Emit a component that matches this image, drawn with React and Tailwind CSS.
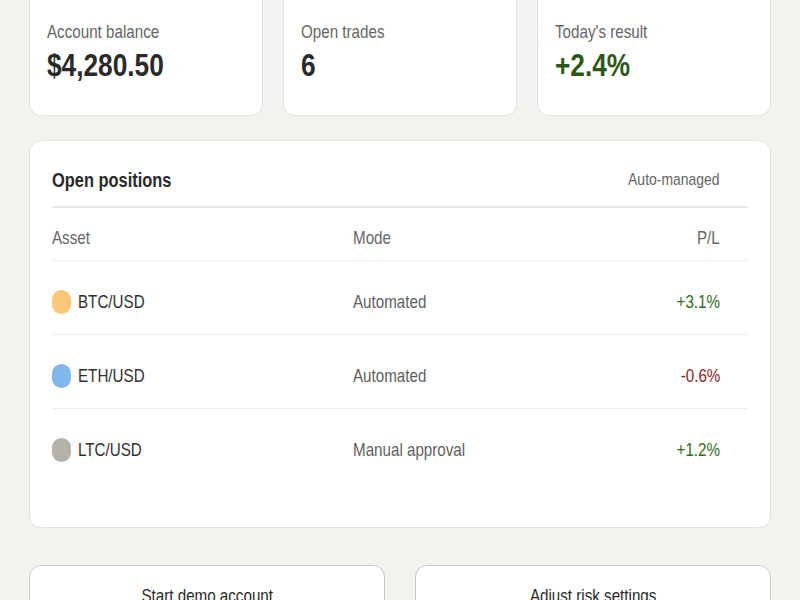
import React from "react";

// narrow text: Arial-metric font squeezed horizontally like the screenshot
const N = ({ children, className = "", origin = "origin-left" }) => (
  <span className={`inline-block scale-x-[0.82] whitespace-nowrap ${origin} ${className}`}>{children}</span>
);

const stats = [
  { label: "Account balance", value: "$4,280.50", color: "text-[#2a2a2a]" },
  { label: "Open trades", value: "6", color: "text-[#2a2a2a]" },
  { label: "Today's result", value: "+2.4%", color: "text-[#2d5716]" },
];

const positions = [
  { asset: "BTC/USD", dot: "bg-[#f8c878]", mode: "Automated", pl: "+3.1%", plColor: "text-[#35691c]" },
  { asset: "ETH/USD", dot: "bg-[#82b6ec]", mode: "Automated", pl: "-0.6%", plColor: "text-[#8a2424]" },
  { asset: "LTC/USD", dot: "bg-[#b6b2aa]", mode: "Manual approval", pl: "+1.2%", plColor: "text-[#35691c]" },
];

const App = () => {
  return (
    <div className="min-h-[600px] bg-[#f3f2ee] px-[29px] font-['Liberation_Sans',Arial,sans-serif] text-[#333]">
      {/* stats */}
      <div className="grid grid-cols-3 gap-[20px]">
        {stats.map((s) => (
          <div
            key={s.label}
            className="h-[116px] rounded-b-[12px] border border-t-0 border-[#e3e1db] bg-white px-[17px] pt-[21px]"
          >
            <div className="text-[18.5px] leading-[22px] text-[#666]">
              <N>{s.label}</N>
            </div>
            <div className={`mt-[4px] text-[32px] font-bold leading-[36px] ${s.color}`}>
              <N>{s.value}</N>
            </div>
          </div>
        ))}
      </div>

      {/* positions */}
      <div className="mt-[24px] rounded-[12px] border border-[#e3e1db] bg-white px-[22px] pb-[45px] pt-[25px]">
        <div className="flex items-center justify-between border-b-2 border-[#e8e6e1] pb-[12px] pr-[28px]">
          <h2 className="text-[20px] font-bold leading-[28px] text-[#2a2a2a]">
            <N>Open positions</N>
          </h2>
          <span className="text-[17px] leading-[22px] text-[#666]">
            <N origin="origin-right">Auto-managed</N>
          </span>
        </div>

        <div className="grid grid-cols-[301px_1fr_auto] border-b border-[#efede9] pb-[11px] pr-[28px] pt-[19px] text-[18.5px] leading-[22px] text-[#666]">
          <N>Asset</N>
          <N>Mode</N>
          <N origin="origin-right">P/L</N>
        </div>

        {positions.map((p, i) => (
          <div
            key={p.asset}
            className={`grid grid-cols-[301px_1fr_auto] items-center pb-[20px] pr-[28px] pt-[29px] text-[18.5px] leading-[22px] ${
              i < positions.length - 1 ? "border-b border-[#efede9]" : ""
            }`}
          >
            <div className="flex items-center gap-[7px]">
              <span className={`h-[24px] w-[19px] shrink-0 rounded-full ${p.dot}`} />
              <N className="text-[#2f2f2f]">{p.asset}</N>
            </div>
            <N className="text-[#5f5f5f]">{p.mode}</N>
            <N origin="origin-right" className={p.plColor}>{p.pl}</N>
          </div>
        ))}
      </div>

      {/* actions */}
      <div className="mt-[37px] grid grid-cols-2 gap-[30px]">
        <button className="flex h-[60px] items-center justify-center rounded-[12px] border border-[#c9c7c1] bg-white pt-[2px] text-[18.5px] text-[#2a2a2a]">
          <N origin="origin-center">Start demo account</N>
        </button>
        <button className="flex h-[60px] items-center justify-center rounded-[12px] border border-[#c9c7c1] bg-white pt-[2px] text-[18.5px] text-[#2a2a2a]">
          <N origin="origin-center">Adjust risk settings</N>
        </button>
      </div>
    </div>
  );
};

export default App;
